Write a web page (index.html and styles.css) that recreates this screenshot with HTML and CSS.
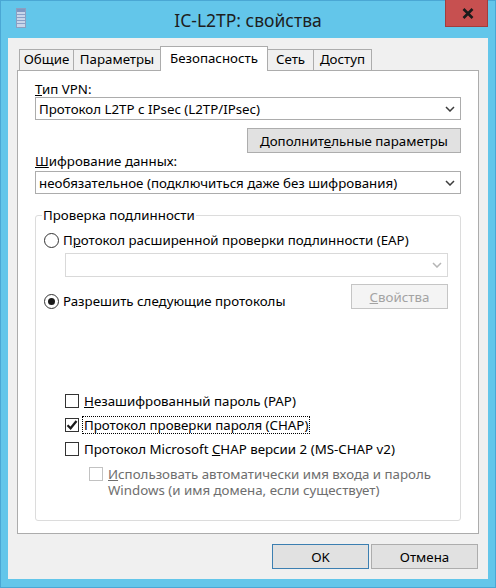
FILE: index.html
```html
<!DOCTYPE html>
<html lang="ru">
<head>
<meta charset="utf-8">
<title>IC-L2TP: свойства</title>
<link rel="stylesheet" href="styles.css">
</head>
<body>
<div class="window">
  <div class="titlebar">
    <div class="tb-left">
      <svg class="app-icon" width="10" height="20" viewBox="0 0 10 20">
        <rect x="0.5" y="0.5" width="9" height="19" fill="#c9d6ea" stroke="#8c9fc0"/>
        <rect x="1" y="1" width="8" height="3" fill="#7f97c2"/>
        <line x1="1" y1="6.5" x2="9" y2="6.5" stroke="#8aa0c8"/>
        <line x1="1" y1="9.5" x2="9" y2="9.5" stroke="#8aa0c8"/>
        <line x1="1" y1="12.5" x2="9" y2="12.5" stroke="#8aa0c8"/>
        <line x1="1" y1="15.5" x2="9" y2="15.5" stroke="#8aa0c8"/>
      </svg>
    </div>
    <div class="title">IC-L2TP: свойства</div>
    <div class="tb-right">
      <div class="close">
        <svg width="12" height="11" viewBox="0 0 12 11">
          <path d="M1.5 1 L10.5 10 M10.5 1 L1.5 10" stroke="#1b1b1b" stroke-width="2.6" fill="none"/>
        </svg>
      </div>
    </div>
  </div>
  <div class="client">
    <div class="tabs">
      <div class="tab t1">Общие</div>
      <div class="tab t2">Параметры</div>
      <div class="tab t3 active">Безопасность</div>
      <div class="tab t4">Сеть</div>
      <div class="tab t5">Доступ</div>
    </div>
    <div class="panel">
      <div class="label"><u>Т</u>ип VPN:</div>
      <div class="select">
        <span>Протокол L2TP с IPsec (L2TP/IPsec)</span>
        <svg class="chev" width="10" height="6" viewBox="0 0 10 6"><path d="M1 1 L5 5 L9 1" stroke="#3c3c3c" stroke-width="1.5" fill="none"/></svg>
      </div>
      <div class="row-right">
        <button class="btn btn-wide">Дополнит<u>е</u>льные параметры</button>
      </div>
      <div class="label"><u>Ш</u>ифрование данных:</div>
      <div class="select select2">
        <span>необязательное (подключиться даже без шифрования)</span>
        <svg class="chev" width="10" height="6" viewBox="0 0 10 6"><path d="M1 1 L5 5 L9 1" stroke="#3c3c3c" stroke-width="1.5" fill="none"/></svg>
      </div>
      <fieldset class="group">
        <legend>Проверка подлинности</legend>
        <div class="radio-row r1">
          <span class="radio"></span>
          <span>П<u>р</u>отокол расширенной проверки подлинности (EAP)</span>
        </div>
        <div class="select disabled">
          <span></span>
          <svg class="chev" width="10" height="6" viewBox="0 0 10 6"><path d="M1 1 L5 5 L9 1" stroke="#b5b5b5" stroke-width="1.5" fill="none"/></svg>
        </div>
        <div class="row-split">
          <div class="radio-row">
            <span class="radio checked"></span>
            <span>Разрешить следующие протоколы</span>
          </div>
          <button class="btn btn-disabled"><u>С</u>войства</button>
        </div>
        <div class="check-row first">
          <span class="check"></span>
          <span><u>Н</u>езашифрованный пароль (PAP)</span>
        </div>
        <div class="check-row">
          <span class="check">
            <svg width="12" height="12" viewBox="0 0 12 12"><path d="M1.5 6.2 L4.6 9.3 L10.5 2" stroke="#1a1a1a" stroke-width="2.2" fill="none"/></svg>
          </span>
          <span class="focus">Протокол проверки пароля (CHAP)</span>
        </div>
        <div class="check-row">
          <span class="check"></span>
          <span>Протокол Microsoft <u>C</u>HAP версии 2 (MS-CHAP v2)</span>
        </div>
        <div class="check-row sub">
          <span class="check dis"></span>
          <div class="dis-text">
            <div class="dl"><u>И</u>спользовать автоматически имя входа и пароль</div>
            <div class="dl">Windows (и имя домена, если существует)</div>
          </div>
        </div>
      </fieldset>
    </div>
    <div class="buttons">
      <button class="btn btn-ok">OK</button>
      <button class="btn btn-cancel">Отмена</button>
    </div>
  </div>
</div>
</body>
</html>
```

FILE: styles.css
```css
* { box-sizing: border-box; }

body {
  margin: 0;
  font-family: "Noto Sans", "Segoe UI", "DejaVu Sans", sans-serif;
  font-size: 13.3px;
  line-height: 16px;
  color: #000;
  background: #62c5ea;
}

.window {
  width: 496px;
  height: 588px;
  background: #63c6ea;
  padding: 0 8px 9px;
  display: flex;
  flex-direction: column;
  box-shadow: inset 0 0 0 1px #4aa7d4;
}

.titlebar {
  height: 38px;
  flex: none;
  display: grid;
  grid-template-columns: 1fr auto 1fr;
  align-items: start;
}

.tb-left { padding: 8px 0 0 8px; }
.app-icon { display: block; }

.title {
  font-size: 17.5px;
  line-height: 24px;
  padding-top: 8px;
  color: #1e1e1e;
}

.tb-right { display: flex; justify-content: flex-end; }

.close {
  width: 43px;
  height: 27px;
  background: #c75050;
  border: 1px solid #a33c3c;
  border-top: none;
  display: flex;
  align-items: center;
  justify-content: center;
  padding-left: 2px;
}

.client {
  flex: 1;
  background: #f0f0f0;
  padding: 8px 9px 0;
  display: flex;
  flex-direction: column;
}

.tabs {
  display: flex;
  align-items: flex-end;
  height: 24px;
  padding-left: 2px;
}

.tab {
  height: 21px;
  border: 1px solid #acacac;
  border-bottom: none;
  background: #f0f0f0;
  margin-right: -1px;
  text-align: center;
  line-height: 19px;
  white-space: nowrap;
}

.t1 { width: 55px; }
.t2 { width: 88px; }
.t3 { width: 108px; }
.t4 { width: 47px; }
.t5 { width: 59px; }

.tab.active {
  height: 25px;
  background: #fff;
  margin-bottom: -1px;
  position: relative;
  z-index: 1;
  line-height: 22px;
}

.panel {
  background: #fff;
  border: 1px solid #acacac;
  padding: 10px 17px 12px;
}

.label { height: 16px; }

.select {
  height: 23px;
  border: 1px solid #acacac;
  background: #fff;
  display: flex;
  align-items: center;
  justify-content: space-between;
  padding: 0 5px 0 3px;
  white-space: nowrap;
}

.select2 { margin-top: 2px; }

.chev { display: block; }

.row-right {
  display: flex;
  justify-content: flex-end;
  margin-top: 8px;
}

.btn {
  height: 25px;
  border: 1px solid #adadad;
  background: #e1e1e1;
  font: inherit;
  color: #000;
  padding: 0;
  margin: 0;
}

.btn-wide { width: 214px; }

.group {
  margin: 13px 0 0;
  padding: 0 12px 22px 8px;
  border: 1px solid #dcdcdc;
  border-radius: 3px;
  min-width: 0;
}

.group legend {
  padding: 0 1px;
  margin-left: -2px;
  line-height: 16px;
}

.radio-row {
  display: flex;
  align-items: center;
  gap: 4px;
  height: 16px;
  white-space: nowrap;
}

.r1 { margin-top: 9px; }

.radio {
  width: 15px;
  height: 15px;
  border: 1px solid #333;
  border-radius: 50%;
  background: #fff;
  display: flex;
  align-items: center;
  justify-content: center;
}

.radio.checked::after {
  content: "";
  width: 7px;
  height: 7px;
  border-radius: 50%;
  background: #1a1a1a;
}

.select.disabled {
  margin: 5px 0 0 21px;
  height: 24px;
  border-color: #d9d9d9;
}

.row-split {
  display: flex;
  justify-content: space-between;
  align-items: flex-end;
  margin-top: 7px;
}

.btn-disabled {
  width: 97px;
  background: #f4f4f4;
  border-color: #c5c5c5;
  color: #a3a3a3;
}

.check-row {
  display: flex;
  align-items: center;
  gap: 5px;
  margin: 8px 0 0 21px;
  height: 16px;
  white-space: nowrap;
}

.check-row.first { margin-top: 84px; }

.check {
  width: 14px;
  height: 14px;
  border: 1px solid #333;
  background: #fff;
  display: flex;
  align-items: center;
  justify-content: center;
  flex: none;
}

.focus {
  outline: 1px dotted #000;
  padding: 0 1px;
  margin-left: -1px;
}

.check-row.sub {
  margin: 9px 0 0 45px;
  height: auto;
  align-items: flex-start;
}

.check.dis {
  border-color: #c2c2c2;
  margin-top: 1px;
}

.dis-text { color: #6e6e6e; }

.dl { height: 16px; }

.buttons {
  display: flex;
  justify-content: flex-end;
  gap: 2px;
  margin-top: 10px;
  padding-right: 1px;
}

.btn-ok {
  width: 97px;
  border-color: #3c7fb1;
}

.btn-cancel { width: 107px; }
```
